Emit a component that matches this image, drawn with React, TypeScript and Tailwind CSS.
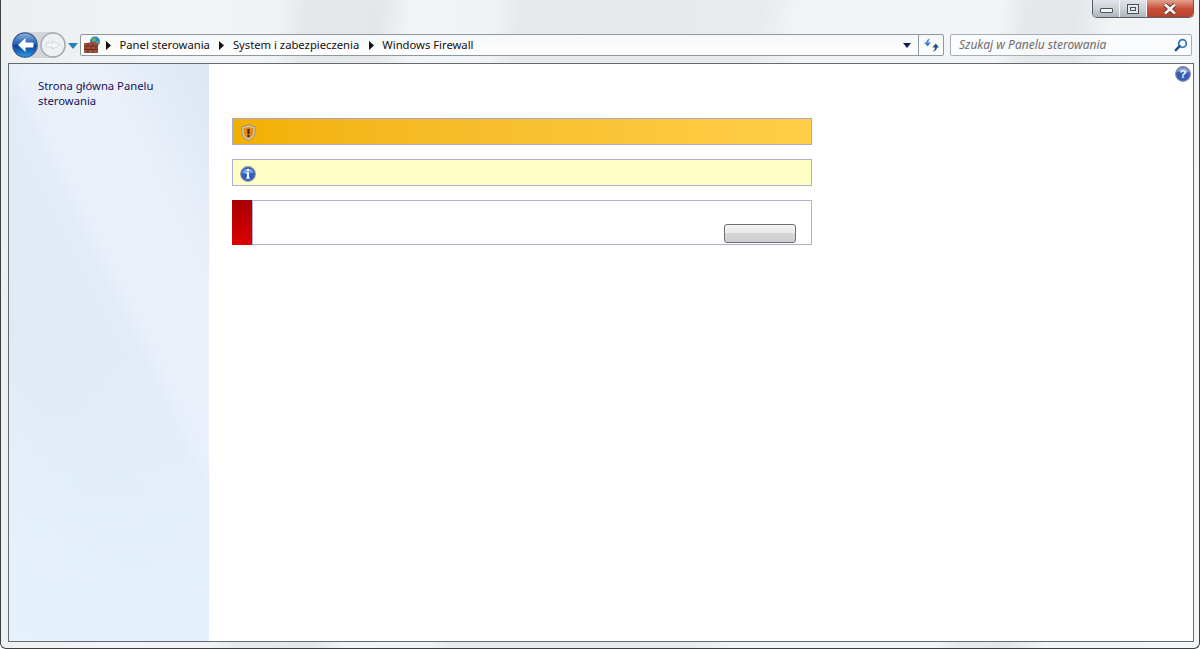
import React from 'react';

const font = 'font-["Noto_Sans","Open_Sans",sans-serif]';

const Crumb = ({ label }: { label: string }) => (
  <div className="flex items-center">
    <svg width="6" height="9" viewBox="0 0 6 9" className="mx-[4px] shrink-0">
      <path d="M1 0 L6 4.5 L1 9 Z" fill="#111" />
    </svg>
    <span className="px-[4.5px] text-[11.25px] leading-4 text-[#111] whitespace-nowrap">{label}</span>
  </div>
);

const WindowButtons = () => (
  <div className="flex h-[18px] mr-[5px] rounded-b-[5px] border border-t-0 border-[#5a5f66] overflow-hidden">
    <div className="w-[27px] flex items-center justify-center border-r border-[#f4f6f8] bg-gradient-to-b from-[#e2e5e9] via-[#cdd2d8] to-[#aeb5bf]">
      <div className="w-[13px] h-[5px] mt-[4px] border border-[#4c5158] bg-[#f2f4f6] rounded-[1px]" />
    </div>
    <div className="w-[27px] flex items-center justify-center border-r border-[#f4f6f8] bg-gradient-to-b from-[#e2e5e9] via-[#cdd2d8] to-[#aeb5bf]">
      <div className="w-[12px] h-[10px] border border-[#4c5158] flex items-center justify-center bg-[#e6e9ec]">
        <div className="w-[6px] h-[4px] border border-[#4c5158]" />
      </div>
    </div>
    <div className="w-[46px] flex items-center justify-center bg-gradient-to-b from-[#e2a08e] via-[#c9503a] to-[#b8412c]">
      <svg width="14" height="12" viewBox="0 0 14 12">
        <path d="M2 1.5 L12 10.5 M12 1.5 L2 10.5" stroke="#4d3a36" strokeWidth="4.4" />
        <path d="M2 1.5 L12 10.5 M12 1.5 L2 10.5" stroke="#f3f0ee" strokeWidth="2.8" />
      </svg>
    </div>
  </div>
);

const NavButtons = () => (
  <div className="flex items-center ml-[11px] w-[68px] shrink-0">
    <div className="flex items-center gap-[2px] rounded-full bg-[#d3d6d9]">
      <svg width="26" height="26" viewBox="0 0 26 26" className="shrink-0">
        <defs>
          <linearGradient id="backFill" x1="0" y1="0" x2="0" y2="1">
            <stop offset="0" stopColor="#8fb4e0" />
            <stop offset="0.48" stopColor="#1b5cb4" />
            <stop offset="0.52" stopColor="#0c3f96" />
            <stop offset="1" stopColor="#2a9be4" />
          </linearGradient>
        </defs>
        <circle cx="13" cy="13" r="12.2" fill="url(#backFill)" stroke="#3a5a8e" strokeWidth="1.2" />
        <path d="M13.5 6 L6 13 L13.5 20 V15.6 H20.5 Q21.5 15.6 21.5 14.6 V11.4 Q21.5 10.4 20.5 10.4 H13.5 Z" fill="#fff" />
      </svg>
      <svg width="26" height="26" viewBox="0 0 26 26" className="shrink-0">
        <circle cx="13" cy="13" r="12" fill="#eef1f3" stroke="#a6abb0" strokeWidth="1.5" />
        <path d="M12.5 9 L20 13 L12.5 17.5 V15 H6 V11 H12.5 Z" fill="#f3f5f6" stroke="#d0d4d7" strokeWidth="0.8" />
      </svg>
    </div>
    <svg width="10" height="6" viewBox="0 0 10 6" className="ml-[2px] mt-[2px] shrink-0">
      <path d="M0 0 H10 L5 6 Z" fill="#2a7fb8" />
    </svg>
  </div>
);

const FirewallIcon = () => (
  <svg width="18" height="18" viewBox="0 0 18 18" className="ml-[2px] shrink-0">
    <circle cx="12" cy="5.5" r="5" fill="#2f7fd1" />
    <path d="M9 2.5 C11 1 13 2 13 4 C13 6 10 6 9 5 Z" fill="#5fb548" />
    <path d="M13.5 5 C15 4.5 16.5 5.5 16 7.5 C15 9 13.5 8 13.5 5 Z" fill="#5fb548" />
    <path d="M1 8 L8 6 H12 V17 H1 Z" fill="#a5503a" />
    <rect x="1" y="7" width="14" height="10" fill="#a5503a" />
    <path d="M1 10 H15 M1 13.5 H15 M5 7 V10 M10 7 V10 M3 10 V13.5 M8 10 V13.5 M13 10 V13.5 M5 13.5 V17 M10 13.5 V17" stroke="#6d2f20" strokeWidth="1" />
  </svg>
);

const AddressBar = () => (
  <div className="flex items-center h-[22px] flex-1 border border-[#8f979f] rounded-[2px] bg-gradient-to-b from-[#f6f7f8] to-white">
    <FirewallIcon />
    <div className="flex items-center flex-1">
      <Crumb label="Panel sterowania" />
      <Crumb label="System i zabezpieczenia" />
      <Crumb label="Windows Firewall" />
    </div>
    <div className="flex items-center justify-center w-[20px] pr-[2px] h-full shrink-0">
      <svg width="8" height="5" viewBox="0 0 8 5">
        <path d="M0 0 H8 L4 5 Z" fill="#101a5c" />
      </svg>
    </div>
    <div className="flex items-center justify-center w-[25px] h-full border-l border-[#8f979f] shrink-0">
      <svg width="15" height="14" viewBox="0 0 15 14">
        <path d="M6.5 0.5 C5 1.5 4.4 3 4.4 4.4 H7 L3.5 8.4 L0 4.4 H2.4 C2.4 2.6 4 0.6 6.5 0.5 Z" fill="#3a86cf" />
        <path d="M8 13.6 C10 13 11 11.4 11 9.6 H8.4 L11.8 5.6 L15 9.6 H13 C13 11.6 11 13.6 8 13.6 Z" fill="#1d4f86" />
      </svg>
    </div>
  </div>
);

const SearchBox = () => (
  <div className="flex items-center justify-between h-[22px] w-[242px] ml-[6px] pl-[8px] pr-[3px] border border-[#a6adb3] rounded-[2px] bg-white/70 shrink-0">
    <span className="text-[12px] leading-4 italic text-[#6d6d6d] whitespace-nowrap">Szukaj w Panelu sterowania</span>
    <svg width="14" height="14" viewBox="0 0 14 14">
      <circle cx="8.5" cy="5.5" r="3.8" fill="none" stroke="#2f78bd" strokeWidth="1.8" />
      <path d="M5.6 8.2 L1.8 12.2" stroke="#1d4f86" strokeWidth="2.4" strokeLinecap="round" />
    </svg>
  </div>
);

const HelpIcon = () => (
  <svg width="16" height="16" viewBox="0 0 16 16">
    <circle cx="8" cy="8" r="7.4" fill="#3a5cb0" stroke="#8290a8" strokeWidth="1.1" />
    <path d="M2 6 A6.4 6.4 0 0 1 14 6 C10 8 6 4 2 6 Z" fill="#8ba6dc" />
    <text x="8" y="12" textAnchor="middle" fontSize="11" fontWeight="700" fill="#fff" fontFamily="Liberation Sans, sans-serif">?</text>
  </svg>
);

const ShieldIcon = () => (
  <svg width="15" height="17" viewBox="0 0 14 16">
    <path d="M7 0.6 C9 2 11 2.4 13.2 2.4 V8 C13.2 11.5 10 14.4 7 15.4 C4 14.4 0.8 11.5 0.8 8 V2.4 C3 2.4 5 2 7 0.6 Z" fill="#d8d2bd" stroke="#8f8b7c" strokeWidth="0.9" />
    <path d="M7 2.4 C8.6 3.4 10 3.7 11.6 3.7 V8 C11.6 10.6 9.2 12.8 7 13.7 C4.8 12.8 2.4 10.6 2.4 8 V3.7 C4 3.7 5.4 3.4 7 2.4 Z" fill="#e88a10" />
    <rect x="6" y="4.6" width="2" height="4.8" fill="#3b2408" />
    <rect x="6" y="10.2" width="2" height="2" fill="#3b2408" />
  </svg>
);

const InfoIcon = () => (
  <svg width="16" height="16" viewBox="0 0 16 16">
    <circle cx="8" cy="8" r="7.3" fill="#2f5fc4" stroke="#8a8f9c" strokeWidth="1.2" />
    <path d="M2.4 7 A5.8 5.8 0 0 1 13.6 7 C10 5.8 6 8.4 2.4 7 Z" fill="#7fa3e6" />
    <rect x="7" y="3" width="2" height="2" fill="#fff" />
    <rect x="7" y="6.4" width="2" height="6.2" fill="#fff" />
    <rect x="6" y="11.6" width="4" height="1" fill="#fff" />
    <rect x="6" y="6.4" width="1" height="1" fill="#fff" />
  </svg>
);

export default function App() {
  return (
    <div className={`${font} flex flex-col w-[1200px] h-[649px] overflow-hidden border-x border-b border-[#3c4044] rounded-b-[6px] bg-[linear-gradient(96deg,#eceff0_0%,#f0f4f6_14%,#eff3f5_22%,#e5e9eb_24%,#e3e7e9_30%,#f0f4f7_32.5%,#eff3f6_39%,#e6eaec_41%,#e7ebed_60%,#f0f4f7_63%,#f1f5f7_79%,#e5e9eb_81%,#e3e7e9_85%,#f2f5f7_88%,#f3f6f8_100%)]`}>
      <div className="flex justify-end h-[31px] shrink-0">
        <WindowButtons />
      </div>

      <div className="flex items-center h-[29px] pb-[1px] pr-[7px] shrink-0">
        <NavButtons />
        <AddressBar />
        <SearchBox />
      </div>

      <div className="flex flex-1 ml-[7px] mr-[5px] mb-[6px] mt-[3px] min-h-0 border border-[#646a70] bg-white">
        <aside className="w-[200px] shrink-0 pl-[29px] pt-[14px] bg-[linear-gradient(to_bottom,transparent_50%,#e6f1fe_100%),linear-gradient(64deg,#e6f1fe_0%,#e4edfa_16%,#e0eaf7_32%,#e2ebf8_56%,#eaf0fa_60%,#ebf1fa_76%,#e1eaf6_90%,#dde7f3_100%)]">
          <a className="block w-[130px] text-[11.25px] leading-[15px] text-[#14125e]">Strona główna Panelu sterowania</a>
        </aside>

        <main className="flex-1 pl-[23px] pr-[2px] pt-[2px]">
          <div className="flex justify-end">
            <HelpIcon />
          </div>
          <div className="w-[580px] mt-[36px] flex flex-col">
            <div className="flex items-center h-[27px] pl-[8px] pt-[2px] border border-[#a9a9d6] bg-gradient-to-r from-[#f2b000] to-[#ffcf48]">
              <ShieldIcon />
            </div>
            <div className="flex items-center h-[27px] mt-[14px] pl-[7px] pt-[2px] border border-[#b0b0d4] bg-[#ffffc6]">
              <InfoIcon />
            </div>
            <div className="flex h-[45px] mt-[14px] border-y border-r border-[#b0b0de] bg-white">
              <div className="w-[20px] -my-px shrink-0 bg-gradient-to-b from-[#a80000] to-[#dc0000]" />
              <div className="flex flex-1 justify-end items-end pr-[15px] pb-[1px] border-l border-[#b0b0de]">
                <div className="w-[72px] h-[19px] rounded-[3px] border border-[#707070] bg-[linear-gradient(#f2f2f2_0%,#ebebeb_45%,#d6d6d6_50%,#cfcfcf_100%)]" />
              </div>
            </div>
          </div>
        </main>
      </div>
    </div>
  );
}
